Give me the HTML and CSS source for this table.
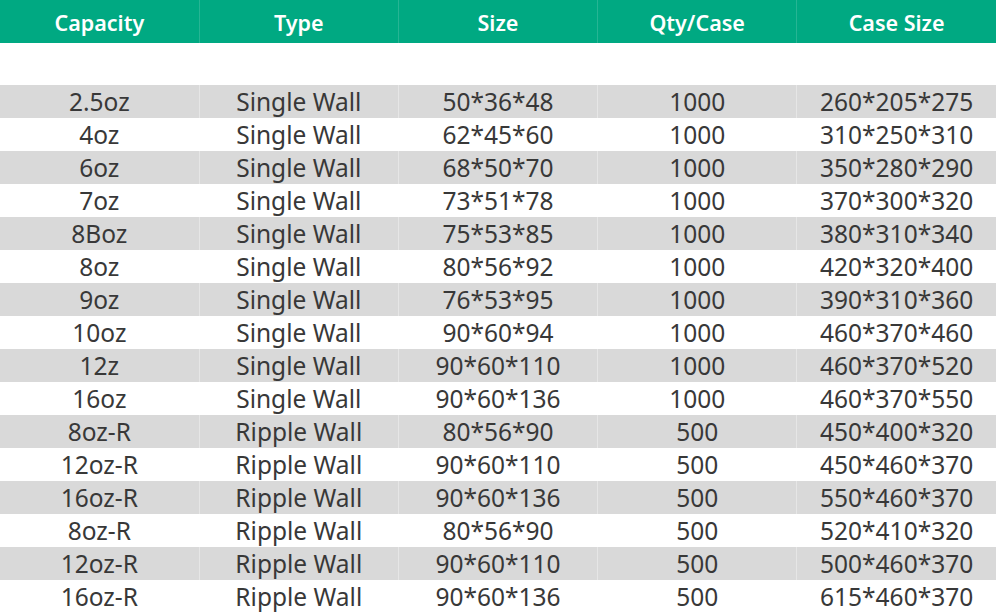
FILE: index.html
```html
<!DOCTYPE html>
<html>
<head>
<meta charset="utf-8">
<link rel="stylesheet" href="styles.css">
</head>
<body>
<table class="spec">
  <thead>
    <tr class="head"><th>Capacity</th><th>Type</th><th>Size</th><th>Qty/Case</th><th>Case Size</th></tr>
  </thead>
  <tbody>
    <tr class="blank"><td></td><td></td><td></td><td></td><td></td></tr>
    <tr><td>2.5oz</td><td>Single Wall</td><td>50*36*48</td><td>1000</td><td>260*205*275</td></tr>
    <tr><td>4oz</td><td>Single Wall</td><td>62*45*60</td><td>1000</td><td>310*250*310</td></tr>
    <tr><td>6oz</td><td>Single Wall</td><td>68*50*70</td><td>1000</td><td>350*280*290</td></tr>
    <tr><td>7oz</td><td>Single Wall</td><td>73*51*78</td><td>1000</td><td>370*300*320</td></tr>
    <tr><td>8Boz</td><td>Single Wall</td><td>75*53*85</td><td>1000</td><td>380*310*340</td></tr>
    <tr><td>8oz</td><td>Single Wall</td><td>80*56*92</td><td>1000</td><td>420*320*400</td></tr>
    <tr><td>9oz</td><td>Single Wall</td><td>76*53*95</td><td>1000</td><td>390*310*360</td></tr>
    <tr><td>10oz</td><td>Single Wall</td><td>90*60*94</td><td>1000</td><td>460*370*460</td></tr>
    <tr><td>12z</td><td>Single Wall</td><td>90*60*110</td><td>1000</td><td>460*370*520</td></tr>
    <tr><td>16oz</td><td>Single Wall</td><td>90*60*136</td><td>1000</td><td>460*370*550</td></tr>
    <tr><td>8oz-R</td><td>Ripple Wall</td><td>80*56*90</td><td>500</td><td>450*400*320</td></tr>
    <tr><td>12oz-R</td><td>Ripple Wall</td><td>90*60*110</td><td>500</td><td>450*460*370</td></tr>
    <tr><td>16oz-R</td><td>Ripple Wall</td><td>90*60*136</td><td>500</td><td>550*460*370</td></tr>
    <tr><td>8oz-R</td><td>Ripple Wall</td><td>80*56*90</td><td>500</td><td>520*410*320</td></tr>
    <tr><td>12oz-R</td><td>Ripple Wall</td><td>90*60*110</td><td>500</td><td>500*460*370</td></tr>
    <tr><td>16oz-R</td><td>Ripple Wall</td><td>90*60*136</td><td>500</td><td>615*460*370</td></tr>
  </tbody>
</table>
</body>
</html>
```
FILE: styles.css
```css
html, body {
  margin: 0;
  padding: 0;
  background: #ffffff;
}
.spec {
  width: 996px;
  table-layout: fixed;
  border-collapse: collapse;
  font-family: "Noto Sans", "Open Sans", "Noto Sans CJK SC", sans-serif;
}
.spec th, .spec td {
  padding: 0;
  text-align: center;
  border-right: 1px solid rgba(255,255,255,0.35);
  white-space: nowrap;
}
.spec th:last-child, .spec td:last-child {
  border-right: none;
}
.head th {
  height: 43px;
  padding-top: 3px;
  box-sizing: border-box;
  background: #00a982;
  color: #ffffff;
  font-size: 21.5px;
  font-weight: 600;
  border-right-color: rgba(255,255,255,0.15);
  border-bottom: 1px solid rgba(255,255,255,0.5);
}
.spec tbody tr {
  height: 33px;
}
.spec tbody tr.blank {
  height: 42px;
  background: #ffffff;
}
.spec tbody td {
  font-size: 24.5px;
  color: #383838;
  line-height: 33px;
}
.spec tbody tr:nth-child(even) {
  background: #d9d9d9;
}
```
